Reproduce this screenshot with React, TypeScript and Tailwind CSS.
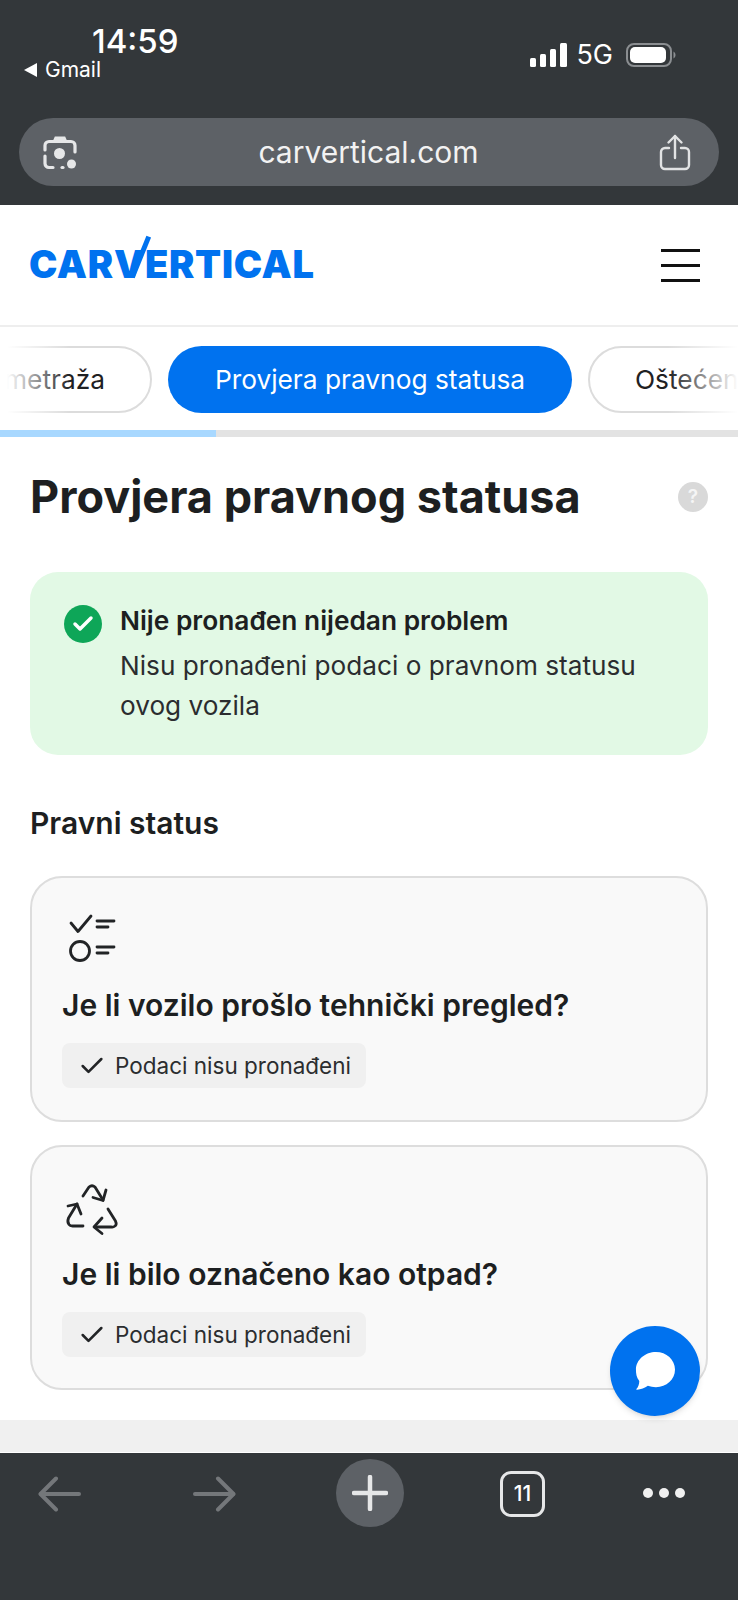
import { Check } from 'lucide-react';

const FONT = "font-['Inter','Noto_Sans',sans-serif]";

function SignalIcon() {
  return (
    <svg width="37" height="24" viewBox="0 0 37 24" fill="#fff">
      <rect x="0" y="15" width="6" height="9" rx="1.5" />
      <rect x="10" y="11" width="6" height="13" rx="1.5" />
      <rect x="20" y="6" width="6" height="18" rx="1.5" />
      <rect x="30" y="0" width="7" height="24" rx="1.5" />
    </svg>
  );
}

function BatteryIcon() {
  return (
    <svg width="50" height="24" viewBox="0 0 50 24">
      <rect x="1" y="1" width="44" height="22" rx="7" fill="none" stroke="#8b8e91" strokeWidth="2" />
      <rect x="4" y="4" width="36" height="16" rx="5" fill="#fff" />
      <path d="M47.500 8.500c1.400.7 2 2 2 3.500s-.6 2.800-2 3.500z" fill="#8b8e91" />
    </svg>
  );
}

function LensIcon() {
  return (
    <svg width="36" height="36" viewBox="0 0 36 36" fill="none" stroke="#e6e7e8" strokeWidth="3.200" strokeLinecap="round">
      <path d="M3 16v-4.500a4 4 0 0 1 4-4h22a4 4 0 0 1 4 4V18" />
      <path d="M3 22v7.500a4 4 0 0 0 4 4h4" />
      <path d="M20 33.500h1" />
      <path d="M12 7l1.500-3.500h9L24 7" fill="#e6e7e8" strokeWidth="2" />
      <circle cx="17.500" cy="19.500" r="5.500" fill="#e6e7e8" stroke="none" />
      <circle cx="29.500" cy="30" r="4.500" fill="#e6e7e8" stroke="none" />
    </svg>
  );
}

function ShareIcon() {
  return (
    <svg width="32" height="37" viewBox="0 0 32 37" fill="none" stroke="#e2e3e4" strokeWidth="2.400" strokeLinecap="round" strokeLinejoin="round">
      <path d="M10 14H6a4 4 0 0 0-4 4v13a4 4 0 0 0 4 4h20a4 4 0 0 0 4-4V18a4 4 0 0 0-4-4h-4" />
      <path d="M16 24V2" />
      <path d="M9.500 8.500 16 2l6.500 6.500" />
    </svg>
  );
}

function ChecklistIcon() {
  return (
    <svg width="48" height="50" viewBox="0 0 48 50" fill="none" stroke="#222426" strokeWidth="2.800" strokeLinecap="round" strokeLinejoin="round">
      <path d="M3 10l7 8.500L23 3" />
      <path d="M29 8h17" />
      <path d="M29 14h11" />
      <circle cx="12" cy="38" r="9.500" />
      <path d="M29 34h17" />
      <path d="M29 40h11" />
    </svg>
  );
}

function RecycleIcon() {
  return (
    <svg width="54" height="52" viewBox="0 0 54 52" fill="none" stroke="#222426" strokeWidth="2.800" strokeLinecap="round" strokeLinejoin="round">
      <path d="M18 12l6-9q3-2.500 6 0l8 13" />
      <path d="M41 6l-3 10.500L28 13.500" />
      <path d="M12 20L3.500 34q-1.500 4 .5 6.500q1 1.500 3.500 1.500H18" />
      <path d="M3 22l9-2 4 10" />
      <path d="M43 25l7.500 12q1.500 3.500-.5 5t-3.500 1H30" />
      <path d="M37 34l-8 9 8 6.500" />
    </svg>
  );
}

function NavArrow({ flip }: { flip?: boolean }) {
  return (
    <svg width="43" height="36" viewBox="0 0 43 36" fill="none" stroke="#74777a" strokeWidth="4" strokeLinecap="round" strokeLinejoin="round" className={flip ? 'rotate-180' : ''}>
      <path d="M41 18H3" />
      <path d="M18 2.500 2.500 18 18 33.500" />
    </svg>
  );
}

function Chip() {
  return (
    <div className="mt-[18px] flex h-[45px] w-[304px] items-center rounded-lg bg-[#f0f0f0] pl-[16px]">
      <Check size={28} strokeWidth={2.200} className="text-[#222426]" />
      <span className="ml-[9px] text-[22.500px] text-[#2b2d2f]">Podaci nisu pronađeni</span>
    </div>
  );
}

export default function App() {
  return (
    <div className={`${FONT} relative flex h-[1600px] w-full flex-col overflow-hidden bg-white`}>
      {/* Browser chrome */}
      <div className="h-[205px] shrink-0 bg-[#33373a] text-white">
        <div className="flex h-[118px] items-start justify-between pl-[24px] pr-[62px] pt-[23px]">
          <div>
            <div className="ml-[68px] text-[33px] font-medium leading-[37px]">14:59</div>
            <div className="-mt-[2px] flex items-center gap-[8px] text-[21px] leading-[23px]">
              <span className="h-0 w-0 border-y-[7px] border-r-[13px] border-y-transparent border-r-white" />
              <span>Gmail</span>
            </div>
          </div>
          <div className="mt-[20px] flex items-center">
            <SignalIcon />
            <span className="ml-[9px] mr-[13px] text-[27px] leading-[24px]">5G</span>
            <BatteryIcon />
          </div>
        </div>
        <div className="mx-[19px] flex h-[68px] items-center justify-between rounded-[34px] bg-[#5d6166] pl-[23px] pr-[28px]">
          <LensIcon />
          <span className="text-[30px] text-[#f2f2f2]">carvertical.com</span>
          <ShareIcon />
        </div>
      </div>

      {/* Site content */}
      <div className="relative flex-1">
        <header className="flex h-[122px] items-center justify-between border-b-2 border-[#eeeeee] pl-[29px] pr-[38px]">
          <div className="flex pb-[2px] text-[38px] font-black leading-[40px] tracking-[0.75px] text-[#0072ef]">
            <span>CAR</span>
            <span className="relative">
              V
              <span className="absolute left-[24px] top-[-9px] h-[44px] w-[5px] rotate-[22deg] bg-[#0072ef]" />
            </span>
            <span>ERTICAL</span>
          </div>
          <div className="flex w-[39px] flex-col gap-[12px]">
            <span className="h-[3px] bg-[#111]" />
            <span className="h-[3px] bg-[#111]" />
            <span className="h-[3px] bg-[#111]" />
          </div>
        </header>

        <div className="relative flex h-[103px] gap-[16px] overflow-hidden pt-[19px] text-[26.300px]">
          <div className="ml-[-78px] flex h-[67px] w-[230px] shrink-0 items-center justify-end rounded-[34px] border-2 border-[#dcdcdc] pr-[45px] text-[#1f2123]">
            Kilometraža
          </div>
          <div className="flex h-[67px] w-[404px] shrink-0 items-center justify-center rounded-[34px] bg-[#0072ef] text-white">
            Provjera pravnog statusa
          </div>
          <div className="flex h-[67px] w-[220px] shrink-0 items-center rounded-[34px] border-2 border-[#dcdcdc] pl-[45px] text-[#1f2123]">
            Oštećenja
          </div>
          <div className="absolute bottom-0 left-0 top-0 w-[70px] bg-gradient-to-r from-white from-[10%] to-transparent" />
          <div className="absolute bottom-0 right-0 top-0 w-[70px] bg-gradient-to-l from-white to-transparent" />
        </div>
        <div className="h-[7px] bg-[#e3e3e3]">
          <div className="h-full w-[216px] bg-[#a8d8ff]" />
        </div>

        <main className="px-[30px]">
          <div className="mt-[31px] flex h-[58px] items-center justify-between">
            <h1 className="text-[45px] font-bold leading-[58px] text-[#1d1f21]">Provjera pravnog statusa</h1>
            <span className="flex h-[30px] w-[30px] items-center justify-center rounded-full bg-[#d9d9d9] text-[19px] font-semibold text-[#f5f5f5]">?</span>
          </div>

          <section className="mt-[46px] flex gap-[18px] rounded-[28px] bg-[#e2f9e5] py-[29px] pl-[34px] pr-[20px]">
            <span className="mt-[4px] flex h-[38px] w-[38px] shrink-0 items-center justify-center rounded-full bg-[#0ea658]">
              <Check size={24} strokeWidth={3.500} className="text-white" />
            </span>
            <div>
              <div className="text-[26.300px] font-semibold leading-[40px] text-[#1d1f21]">Nije pronađen nijedan problem</div>
              <p className="mt-[5px] text-[26.200px] leading-[40px] text-[#2b2d2f]">Nisu pronađeni podaci o pravnom statusu ovog vozila</p>
            </div>
          </section>

          <h2 className="mt-[50px] text-[30px] font-semibold leading-[36px] text-[#1d1f21]">Pravni status</h2>

          <div className="mt-[35px] flex flex-col gap-[23px]">
            <div className="rounded-[32px] border-2 border-[#dddddd] bg-[#f9f9f9] pb-[32px] pl-[30px] pt-[35px]">
              <div className="ml-[6px] h-[50px]">
                <ChecklistIcon />
              </div>
              <h3 className="mt-[22px] text-[30px] font-semibold leading-[40px] text-[#1d1f21]">Je li vozilo prošlo tehnički pregled?</h3>
              <Chip />
            </div>
            <div className="rounded-[32px] border-2 border-[#dddddd] bg-[#f9f9f9] pb-[31px] pl-[30px] pt-[35px]">
              <div className="ml-[3px] h-[50px] pt-[2px]">
                <RecycleIcon />
              </div>
              <h3 className="mt-[22px] text-[30px] font-semibold leading-[40px] text-[#1d1f21]">Je li bilo označeno kao otpad?</h3>
              <Chip />
            </div>
          </div>
        </main>

        {/* Chat button */}
        <button className="absolute bottom-[4px] right-[38px] flex h-[90px] w-[90px] items-center justify-center rounded-full bg-[#0072ef] shadow-md">
          <svg width="40" height="40" viewBox="0 0 42 40" fill="#fff">
            <path d="M22 0c11 0 20 8 20 18.500S33 37 22 37c-3 0-6-.5-8.500-1.500C10 38 5 40 1 39.500c2.500-2.500 3.500-6 3.500-9C1.500 27 1 23 1 18.500 1 8 11 0 22 0z" />
          </svg>
        </button>
      </div>

      {/* Bottom strip and toolbar */}
      <div className="h-[33px] shrink-0 border-b border-white bg-[#f0f0f0]" />
      <nav className="flex h-[147px] shrink-0 items-start bg-[#33373a] pt-[6px] text-white">
        <div className="ml-[38px] mt-[17px]">
          <NavArrow />
        </div>
        <div className="ml-[112px] mt-[17px]">
          <NavArrow flip />
        </div>
        <div className="ml-[100px] flex h-[68px] w-[68px] items-center justify-center rounded-full bg-[#5d6166]">
          <svg width="36" height="36" viewBox="0 0 36 36" stroke="#e6e7e8" strokeWidth="4.500" strokeLinecap="round">
            <path d="M18 2v32M2 18h32" />
          </svg>
        </div>
        <div className="ml-[96px] mt-[12px] flex h-[46px] w-[45px] items-center justify-center rounded-[11px] border-[3px] border-[#e6e7e8] text-[21px] font-medium">
          11
        </div>
        <div className="ml-[98px] mt-[29px] flex gap-[6px]">
          <span className="h-[10px] w-[10px] rounded-full bg-[#f0f0f0]" />
          <span className="h-[10px] w-[10px] rounded-full bg-[#f0f0f0]" />
          <span className="h-[10px] w-[10px] rounded-full bg-[#f0f0f0]" />
        </div>
      </nav>
    </div>
  );
}
